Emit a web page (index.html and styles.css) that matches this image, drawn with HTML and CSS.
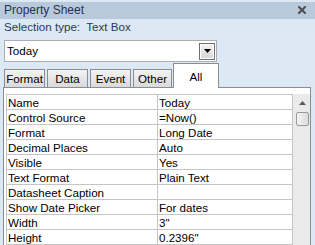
FILE: index.html
```html
<!DOCTYPE html>
<html>
<head>
<meta charset="utf-8">
<link rel="stylesheet" href="styles.css">
</head>
<body>
<div class="sheet">
  <div class="titlebar">
    <span class="title">Property Sheet</span>
    <svg class="close" width="8" height="8" viewBox="0 0 8 8"><path d="M1 1 L7 7 M7 1 L1 7" stroke="#4f4f4f" stroke-width="2" stroke-linecap="square"/></svg>
  </div>
  <div class="seltype">Selection type:&nbsp; Text Box</div>
  <div class="combo">
    <span class="combo-text">Today</span>
    <div class="combo-btn"><svg width="7" height="4" viewBox="0 0 7 4"><path d="M0 0 H7 L3.5 4 Z" fill="#000"/></svg></div>
  </div>
  <div class="tabs">
    <div class="tab w41">Format</div>
    <div class="tab w41">Data</div>
    <div class="tab w41">Event</div>
    <div class="tab w39">Other</div>
    <div class="tab active">All</div>
  </div>
  <div class="panel">
    <div class="grid">
      <div class="cell">Name</div><div class="cell">Today</div>
      <div class="cell">Control Source</div><div class="cell">=Now()</div>
      <div class="cell">Format</div><div class="cell">Long Date</div>
      <div class="cell">Decimal Places</div><div class="cell">Auto</div>
      <div class="cell">Visible</div><div class="cell">Yes</div>
      <div class="cell">Text Format</div><div class="cell">Plain Text</div>
      <div class="cell">Datasheet Caption</div><div class="cell"></div>
      <div class="cell">Show Date Picker</div><div class="cell">For dates</div>
      <div class="cell">Width</div><div class="cell">3"</div>
      <div class="cell">Height</div><div class="cell">0.2396"</div>
    </div>
    <div class="scrollbar">
      <div class="sb-up"><svg width="7" height="4" viewBox="0 0 7 4"><path d="M3.5 0 L7 4 H0 Z" fill="#5a5a5a"/></svg></div>
      <div class="sb-thumb"></div>
    </div>
  </div>
</div>
</body>
</html>
```
FILE: styles.css
```css
html, body {
  margin: 0;
  padding: 0;
}
body {
  width: 315px;
  height: 245px;
  overflow: hidden;
  background: #dde8f5;
  font-family: "Liberation Sans", Arial, sans-serif;
  font-size: 11.6px;
  color: #000;
}
.sheet {
  padding-top: 2px;
}
.titlebar {
  height: 17px;
  background: #b8c9dc;
  display: flex;
  align-items: center;
  justify-content: space-between;
  padding: 0 9px 0 4px;
  line-height: 17px;
  font-size: 12px;
  color: #1f3350;
}
.close {
  display: block;
  margin-top: -2px;
}
.seltype {
  padding-left: 4px;
  line-height: 15px;
  height: 15px;
  margin-bottom: 6px;
  color: #2a3a50;
}
.combo {
  margin-left: 4px;
  width: 211px;
  height: 20px;
  border: 1px solid #abadb3;
  background: #fff;
  display: flex;
  align-items: center;
  justify-content: space-between;
}
.combo-text {
  padding-left: 2px;
  line-height: 20px;
}
.combo-btn {
  width: 14px;
  height: 15px;
  border: 1px solid #6f6f6f;
  box-shadow: inset 0 0 0 1px #fff;
  background: linear-gradient(#f4f4f4, #d4d4d4);
  display: flex;
  align-items: center;
  justify-content: center;
  margin-right: 1px;
}
.tabs {
  margin-top: 1px;
  height: 24px;
  display: flex;
  align-items: flex-end;
  padding-left: 4px;
  gap: 2px;
}
.tab {
  height: 17px;
  line-height: 17px;
  border: 1px solid #8a8d93;
  border-bottom: none;
  background: linear-gradient(#f3f3f3, #dadada);
  text-align: center;
  box-sizing: content-box;
}
.w41 { width: 39px; }
.w39 { width: 37px; }
.tab.active {
  width: 44px;
  height: 24px;
  line-height: 26px;
  background: #fff;
  margin-left: -1px;
  margin-bottom: -1px;
  position: relative;
  z-index: 1;
}
.panel {
  margin-left: 3px;
  height: 200px;
  border: 1px solid #8a8d93;
  background: #fff;
  display: flex;
  align-items: flex-start;
  padding: 6px 0 0 2px;
  box-sizing: content-box;
  width: 304px;
}
.grid {
  display: grid;
  grid-template-columns: 150px 134px;
  grid-auto-rows: 14px;
  gap: 1px;
  padding: 1px;
  background: #c5c5c5;
}
.cell {
  background: #fff;
  line-height: 15px;
  padding-left: 1px;
  white-space: nowrap;
  overflow: hidden;
}
.scrollbar {
  width: 17px;
  height: 160px;
  background: #eaeaea;
  border-left: 1px solid #ececec;
  box-sizing: border-box;
  display: flex;
  flex-direction: column;
  align-items: center;
}
.sb-up {
  height: 17px;
  width: 17px;
  display: flex;
  align-items: center;
  justify-content: center;
}
.sb-thumb {
  width: 13px;
  height: 14px;
  margin-top: 1px;
  border: 1px solid #9a9a9a;
  border-radius: 2px;
  background: linear-gradient(90deg, #f4f4f4, #dcdcdc);
  box-sizing: border-box;
}
```
